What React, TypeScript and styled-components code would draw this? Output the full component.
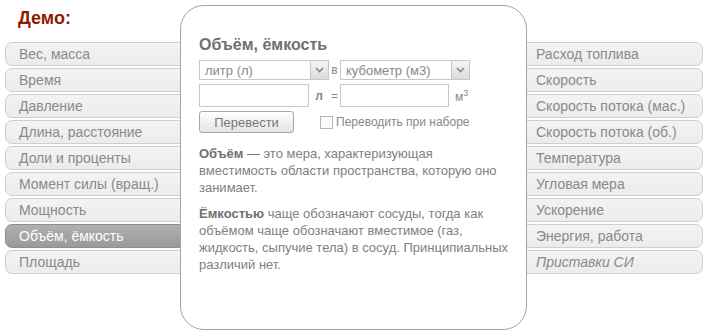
import React from "react";
import styled, { createGlobalStyle } from "styled-components";

const GlobalStyle = createGlobalStyle`
  html, body {
    margin: 0;
    padding: 0;
    background: #fff;
  }
  body {
    font-family: "Liberation Sans", Arial, sans-serif;
  }
`;

const Page = styled.div`
  display: flex;
  align-items: flex-start;
  width: 709px;
  height: 336px;
  padding: 0 0 0 5px;
  box-sizing: border-box;
  overflow: hidden;
`;

const LeftColumn = styled.div`
  width: 195px;
  flex-shrink: 0;
  display: flex;
  flex-direction: column;
`;

const Heading = styled.h2`
  margin: 7px 0 12px 13px;
  font-size: 18px;
  line-height: 23px;
  font-weight: bold;
  color: #8f1c00;
`;

const RightColumn = styled.div`
  width: 181px;
  flex-shrink: 0;
  margin-left: -5px;
  padding-top: 42px;
  display: flex;
  flex-direction: column;
`;

const List = styled.div`
  display: flex;
  flex-direction: column;
  gap: 2px;
`;

const Item = styled.div<{ $side: "left" | "right"; $active?: boolean; $italic?: boolean }>`
  height: 24px;
  box-sizing: border-box;
  padding-left: 13px;
  border: 1px solid ${({ $active }) => ($active ? "#8e8e8e" : "#cfcfcf")};
  border-radius: ${({ $side }) => ($side === "left" ? "7px 0 0 7px" : "0 7px 7px 0")};
  background: ${({ $active }) =>
    $active ? "linear-gradient(#b0b0b0, #9a9a9a)" : "linear-gradient(#f3f3f3, #ececec)"};
  color: ${({ $active }) => ($active ? "#fff" : "#8a8a8a")};
  font-size: 14px;
  line-height: 22px;
  font-style: ${({ $italic }) => ($italic ? "italic" : "normal")};
  white-space: nowrap;
`;

const Panel = styled.div`
  position: relative;
  z-index: 1;
  width: 347px;
  height: 325px;
  margin: 5px 0 0 -20px;
  flex-shrink: 0;
  box-sizing: border-box;
  border: 1px solid #a6a6a6;
  border-radius: 24px;
  background: #fff;
  padding: 29px 18px 0 18px;
  color: #777;
`;

const Title = styled.h3`
  margin: 0 0 5px;
  font-size: 16px;
  line-height: 20px;
  font-weight: bold;
  color: #707070;
`;

const Row = styled.div`
  display: flex;
  align-items: center;
  margin-bottom: 4px;
  font-size: 12px;
`;

const Select = styled.div<{ $width: number }>`
  width: ${({ $width }) => $width}px;
  height: 20px;
  box-sizing: border-box;
  border: 1px solid #c8c8c8;
  display: flex;
  align-items: center;
  justify-content: space-between;
  padding-left: 5px;
  font-size: 13px;
  color: #888;
  background: #fff;
`;

const SelectArrow = styled.span`
  width: 18px;
  height: 18px;
  box-sizing: border-box;
  border-left: 1px solid #c8c8c8;
  background: linear-gradient(#f4f4f4, #dcdcdc);
  display: flex;
  align-items: center;
  justify-content: center;
`;

const Joiner = styled.span<{ $bold?: boolean; $w: number }>`
  width: ${({ $w }) => $w}px;
  text-align: center;
  font-size: 12px;
  font-weight: ${({ $bold }) => ($bold ? "bold" : "normal")};
  color: #888;
`;

const Input = styled.div<{ $width: number }>`
  width: ${({ $width }) => $width}px;
  height: 23px;
  box-sizing: border-box;
  border: 1px solid #c8c8c8;
  background: #fff;
`;

const Unit = styled.span`
  margin-left: 6px;
  font-size: 12px;
  color: #888;
  sup {
    font-size: 9px;
  }
`;

const Button = styled.button`
  width: 95px;
  height: 22px;
  box-sizing: border-box;
  border: 1px solid #a9a9a9;
  border-radius: 3px;
  background: linear-gradient(#ffffff, #e4e4e4);
  font-family: "Liberation Sans", Arial, sans-serif;
  font-size: 13px;
  color: #777;
  padding: 0;
`;

const CheckLabel = styled.label`
  margin-left: 26px;
  display: flex;
  align-items: center;
  gap: 3px;
  font-size: 12px;
  color: #888;
`;

const CheckBox = styled.span`
  width: 11px;
  height: 11px;
  border: 1px solid #b5b5b5;
  background: #fbfbfb;
`;

const Paragraph = styled.p`
  margin: 12px 0 0;
  font-size: 13px;
  line-height: 17px;
  color: #808080;
  white-space: nowrap;
  & + & {
    margin-top: 9px;
  }
  b {
    color: #707070;
  }
`;

const leftItems = [
  "Вес, масса",
  "Время",
  "Давление",
  "Длина, расстояние",
  "Доли и проценты",
  "Момент силы (вращ.)",
  "Мощность",
  "Объём, ёмкость",
  "Площадь",
];

const rightItems = [
  "Расход топлива",
  "Скорость",
  "Скорость потока (мас.)",
  "Скорость потока (об.)",
  "Температура",
  "Угловая мера",
  "Ускорение",
  "Энергия, работа",
];

const Chevron = () => (
  <svg width="9" height="6" viewBox="0 0 9 6">
    <path d="M1 1 L4.5 4.5 L8 1" fill="none" stroke="#7a8aa0" strokeWidth="1.6" />
  </svg>
);

export default function App() {
  return (
    <>
      <GlobalStyle />
      <Page>
        <LeftColumn>
          <Heading>Демо:</Heading>
          <List>
            {leftItems.map((name) => (
              <Item key={name} $side="left" $active={name === "Объём, ёмкость"}>
                {name}
              </Item>
            ))}
          </List>
        </LeftColumn>

        <Panel>
          <Title>Объём, ёмкость</Title>
          <Row>
            <Select $width={130}>
              литр (л)
              <SelectArrow>
                <Chevron />
              </SelectArrow>
            </Select>
            <Joiner $w={11}>в</Joiner>
            <Select $width={130}>
              кубометр (м3)
              <SelectArrow>
                <Chevron />
              </SelectArrow>
            </Select>
          </Row>
          <Row>
            <Input $width={110} />
            <Joiner $w={20} $bold>
              л
            </Joiner>
            <Joiner $w={11}>=</Joiner>
            <Input $width={109} />
            <Unit>
              м<sup>3</sup>
            </Unit>
          </Row>
          <Row>
            <Button>Перевести</Button>
            <CheckLabel>
              <CheckBox />
              Переводить при наборе
            </CheckLabel>
          </Row>
          <Paragraph>
            <b>Объём</b> — это мера, характеризующая
            <br />
            вместимость области пространства, которую оно
            <br />
            занимает.
          </Paragraph>
          <Paragraph>
            <b>Ёмкостью</b> чаще обозначают сосуды, тогда как
            <br />
            объёмом чаще обозначают вместимое (газ,
            <br />
            жидкость, сыпучие тела) в сосуд. Принципиальных
            <br />
            различий нет.
          </Paragraph>
        </Panel>

        <RightColumn>
          <List>
            {rightItems.map((name) => (
              <Item key={name} $side="right">
                {name}
              </Item>
            ))}
            <Item $side="right" $italic>
              Приставки СИ
            </Item>
          </List>
        </RightColumn>
      </Page>
    </>
  );
}
